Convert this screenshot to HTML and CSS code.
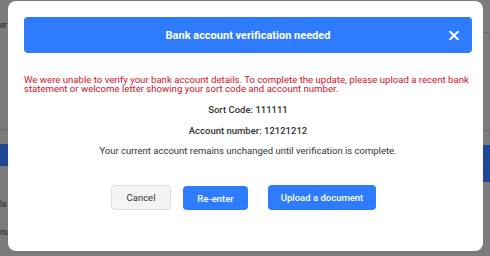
FILE: index.html
```html
<!DOCTYPE html>
<html>
<head>
<meta charset="utf-8">
<link rel="stylesheet" href="styles.css">
</head>
<body>
<div class="page">
  <div class="strip strip-left">
    <div class="bg-text bg-er">er</div>
    <div class="bg-rule"></div>
    <div class="bg-blue bg-blue-left"></div>
    <div class="bg-text bg-la">la</div>
    <div class="bg-text bg-nu">nu</div>
  </div>
  <div class="middle"></div>
  <div class="strip strip-right">
    <div class="bg-rule bg-rule-top"></div>
    <div class="bg-rule bg-rule-mid"></div>
    <div class="bg-blue bg-blue-right"></div>
  </div>
</div>

<div class="modal">
  <div class="modal-header">
    <span class="modal-title">Bank account verification needed</span>
    <span class="modal-close" aria-label="Close">
      <svg width="10" height="9" viewBox="0 0 10 9"><path d="M1.2 0.8 L8.8 8.2 M8.8 0.8 L1.2 8.2" stroke="#fff" stroke-width="2" stroke-linecap="square"/></svg>
    </span>
  </div>
  <p class="warning">We were unable to verify your bank account details. To complete the update, please upload a recent bank statement or welcome letter showing your sort code and account number.</p>
  <p class="detail">Sort Code: 111111</p>
  <p class="detail detail-2">Account number: 12121212</p>
  <p class="note">Your current account remains unchanged until verification is complete.</p>
  <div class="actions">
    <button class="btn btn-cancel">Cancel</button>
    <button class="btn btn-primary btn-reenter">Re-enter</button>
    <button class="btn btn-primary btn-upload">Upload a document</button>
  </div>
</div>
</body>
</html>
```
FILE: styles.css
```css
html, body {
  margin: 0;
  padding: 0;
}
body {
  width: 490px;
  height: 256px;
  overflow: hidden;
  background: #7b7b7b;
  font-family: Roboto, "Liberation Sans", sans-serif;
}
.page {
  display: grid;
  grid-template-columns: 8px 1fr 7px;
  height: 256px;
}
.strip {
  display: flex;
  flex-direction: column;
}
.bg-text {
  font-size: 8.5px;
  line-height: 12px;
  color: #262626;
  white-space: nowrap;
  letter-spacing: -0.4px;
}
.bg-er {
  margin-top: 19px;
}
.bg-rule {
  height: 1px;
  background: #6c6c6c;
}
.strip-left .bg-rule {
  margin-top: 98px;
}
.bg-blue {
  background: #1f4796;
}
.bg-blue-left {
  margin-top: 14px;
  height: 22px;
}
.bg-la {
  margin-top: 32px;
}
.bg-nu {
  margin-top: 16px;
}
.bg-rule-top {
  margin-top: 32px;
}
.bg-rule-mid {
  margin-top: 97px;
}
.bg-blue-right {
  margin-top: 14px;
  height: 37px;
}

.modal {
  position: absolute;
  left: 8px;
  top: 1px;
  width: 475px;
  height: 250px;
  box-sizing: border-box;
  background: #fff;
  border-radius: 8px;
  padding: 16px 11px 0 16px;
  display: flex;
  flex-direction: column;
}
.modal-header {
  height: 36px;
  background: #2e7bfe;
  border-radius: 4px;
  display: flex;
  align-items: center;
  justify-content: center;
  position: relative;
}
.modal-title {
  color: #fff;
  font-weight: 700;
  font-size: 11px;
}
.modal-close {
  position: absolute;
  right: 13px;
  top: 14px;
  width: 10px;
  height: 9px;
  display: flex;
}
.warning {
  margin: 22px 0 0 0;
  color: #d0102a;
  font-size: 9.6px;
  line-height: 9px;
}
.detail {
  margin: 11px 0 0 0;
  text-align: center;
  color: #333;
  font-size: 9.5px;
  font-weight: 500;
  line-height: 12px;
}
.detail-2 {
  margin-top: 9px;
}
.note {
  margin: 8px 0 0 0;
  text-align: center;
  color: #333;
  font-size: 9.5px;
  line-height: 12px;
}
.actions {
  margin-top: 28px;
  display: flex;
  padding-left: 87px;
}
.btn {
  font-family: Roboto, "Liberation Sans", sans-serif;
  font-size: 9.5px;
  height: 25px;
  border-radius: 4px;
  padding: 0;
  cursor: pointer;
}
.btn-cancel {
  width: 60px;
  background: #f4f4f4;
  border: 1px solid #dedede;
  color: #333;
}
.btn-primary {
  background: #2e7bfe;
  border: none;
  color: #fff;
  font-weight: 500;
}
.btn-reenter {
  width: 65px;
  margin-left: 12px;
  height: 24px;
  margin-top: 1px;
}
.btn-upload {
  width: 108px;
  margin-left: 20px;
}
```
